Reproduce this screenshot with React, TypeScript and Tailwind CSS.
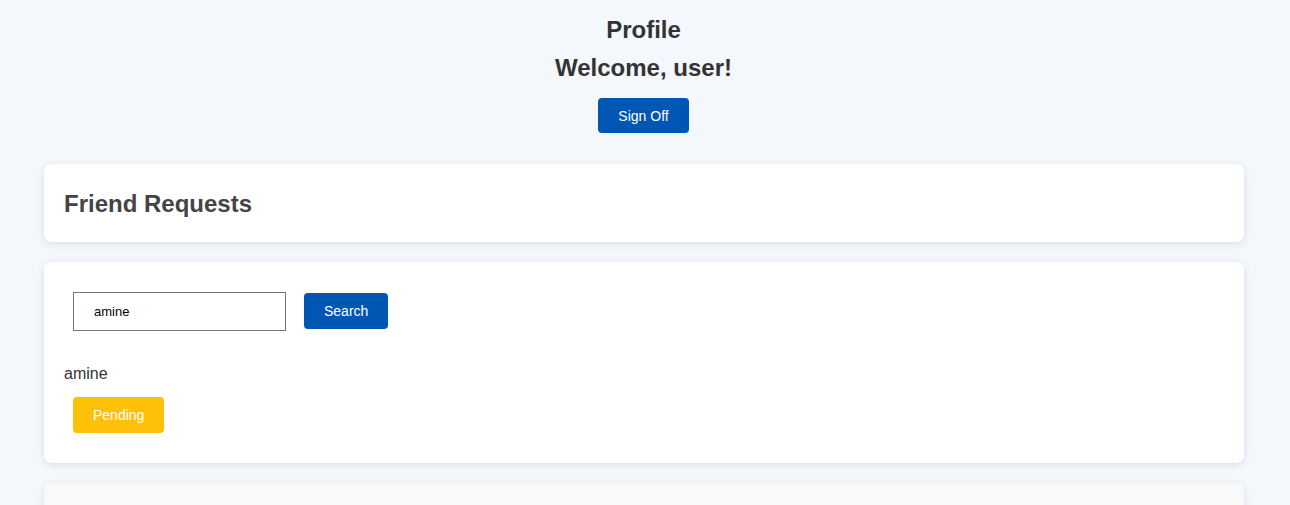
export default function App() {
  return (
    <div className="min-h-screen bg-[#f4f7fb] font-['Liberation_Sans',Arial,sans-serif] pb-10">
      <header className="flex flex-col items-center pt-4 pr-[3px]">
        <h1 className="text-2xl leading-7 font-bold text-[#333]">Profile</h1>
        <h2 className="mt-[10px] text-2xl leading-7 font-bold text-[#333]">Welcome, user!</h2>
        <button
          type="button"
          className="mt-4 h-[35px] px-[20.5px] rounded bg-[#0056b3] text-white text-sm"
        >
          Sign Off
        </button>
      </header>

      <main className="ml-[44px] mt-[31px] w-[1200px] flex flex-col gap-5">
        <section className="bg-white rounded-lg shadow-[0_2px_8px_rgba(0,0,0,0.1)] px-5 pt-[26px] pb-6">
          <h2 className="text-2xl leading-7 font-bold text-[#444]">Friend Requests</h2>
        </section>

        <section className="bg-white rounded-lg shadow-[0_2px_8px_rgba(0,0,0,0.1)] px-5 pt-[30px] pb-[30px]">
          <div className="flex items-start gap-[18px] pl-[9px]">
            <input
              type="text"
              defaultValue="amine"
              className="w-[213px] h-[39px] border border-[#767676] pl-5 text-[13px] text-black outline-none"
            />
            <button
              type="button"
              className="mt-px h-[36px] px-5 rounded bg-[#0056b3] text-white text-sm"
            >
              Search
            </button>
          </div>
          <p className="mt-[34px] text-base leading-[18px] text-[#333]">amine</p>
          <button
            type="button"
            className="ml-[9px] mt-[14px] h-[36px] px-5 rounded bg-[#ffc107] text-white text-sm"
          >
            Pending
          </button>
        </section>

        <section className="bg-[#f9f9f9] rounded-lg shadow-[0_2px_8px_rgba(0,0,0,0.1)] h-[120px]" />
      </main>
    </div>
  );
}
